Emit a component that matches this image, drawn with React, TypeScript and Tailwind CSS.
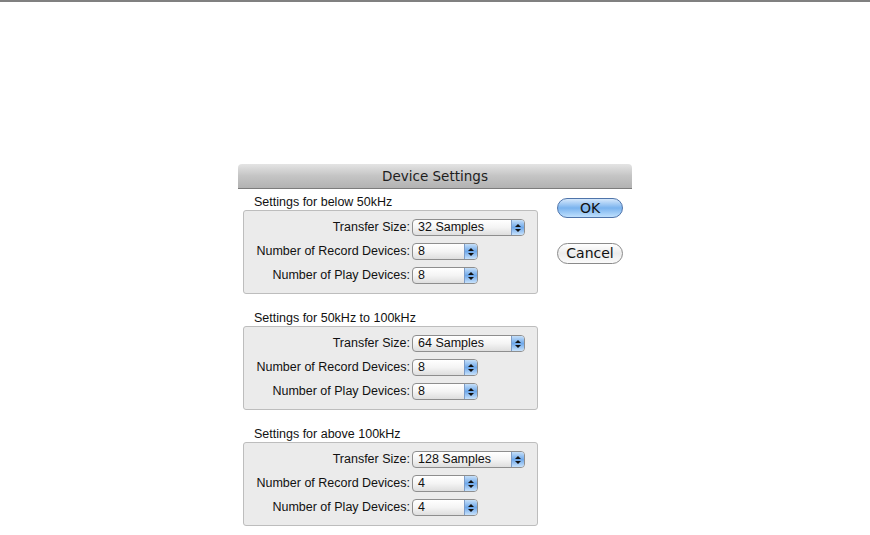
import React from "react";

function Popup({ value, wide }: { value: string; wide?: boolean }) {
  return (
    <div
      className={`ml-[2px] flex h-[17px] items-stretch rounded-[4px] border border-[#8e8e8e] bg-linear-to-b from-white via-[#f4f4f4] to-[#dedede] ${
        wide ? "w-[113px]" : "w-[66px]"
      }`}
    >
      <span className="pl-[5px] text-[12.5px] leading-[15px] text-[#111]">{value}</span>
      <span className="ml-auto flex w-[13px] flex-col items-center justify-center gap-[2px] rounded-r-[3px] border-l border-[#7d9cc7] bg-linear-to-b from-[#c5dff8] via-[#6ea8ea] to-[#c8e2fb]">
        <svg width="6" height="3" viewBox="0 0 6 3">
          <path d="M0 3 L3 0 L6 3 Z" fill="#111" />
        </svg>
        <svg width="6" height="3" viewBox="0 0 6 3">
          <path d="M0 0 L6 0 L3 3 Z" fill="#111" />
        </svg>
      </span>
    </div>
  );
}

function Row({ label, value, wide }: { label: string; value: string; wide?: boolean }) {
  return (
    <div className="flex h-[17px] items-center">
      <div className="w-[166px] text-right text-[12.5px] leading-[17px] text-[#111]">{label}</div>
      <Popup value={value} wide={wide} />
    </div>
  );
}

function Group({
  title,
  size,
  rec,
  play,
  className,
}: {
  title: string;
  size: string;
  rec: string;
  play: string;
  className?: string;
}) {
  return (
    <div className={className}>
      <div className="h-[15px] pl-[11px] text-[12.5px] leading-[15px] text-[#111]">{title}</div>
      <div className="flex h-[84px] flex-col gap-[7px] rounded-[3px] border border-[#bdbdbd] bg-[#ebebeb] pt-[8px]">
        <Row label="Transfer Size:" value={size} wide />
        <Row label="Number of Record Devices:" value={rec} />
        <Row label="Number of Play Devices:" value={play} />
      </div>
    </div>
  );
}

export default function App() {
  return (
    <div
      className="h-[535px] w-[870px] overflow-hidden border-t-2 border-[#808080] bg-white"
      style={{ fontFamily: '"Liberation Sans", Arial, sans-serif' }}
    >
      <div className="ml-[238px] mt-[162px] w-[394px]">
        <div
          className="h-[25px] rounded-t-[4px] border-b border-[#7c7c7c] bg-linear-to-b from-[#e4e4e4] via-[#c4c4c4] to-[#b2b2b2] text-center text-[13.5px] leading-[24px] text-[#1e1e1e]"
          style={{ fontFamily: '"DejaVu Sans", sans-serif' }}
        >
          Device Settings
        </div>
        <div className="flex pl-[5px] pt-[6px]">
          <div className="flex w-[295px] flex-col">
            <Group title="Settings for below 50kHz" size="32 Samples" rec="8" play="8" />
            <Group className="mt-[17px]" title="Settings for 50kHz to 100kHz" size="64 Samples" rec="8" play="8" />
            <Group className="mt-[17px]" title="Settings for above 100kHz" size="128 Samples" rec="4" play="4" />
          </div>
          <div
            className="ml-[19px] mt-[3px] flex flex-col"
            style={{ fontFamily: '"DejaVu Sans", sans-serif' }}
          >
            <button className="h-[20px] w-[66px] rounded-full border border-[#4f74aa] bg-linear-to-b from-[#d6e8fb] via-[#7ab3ee] to-[#bfe0fd] text-[14px] leading-[18px] text-[#111]">
              OK
            </button>
            <button className="mt-[25px] h-[21px] w-[66px] rounded-full border border-[#8a8a8a] bg-linear-to-b from-white via-[#ececec] to-[#fafafa] text-[14px] leading-[19px] text-[#111]">
              Cancel
            </button>
          </div>
        </div>
      </div>
    </div>
  );
}
